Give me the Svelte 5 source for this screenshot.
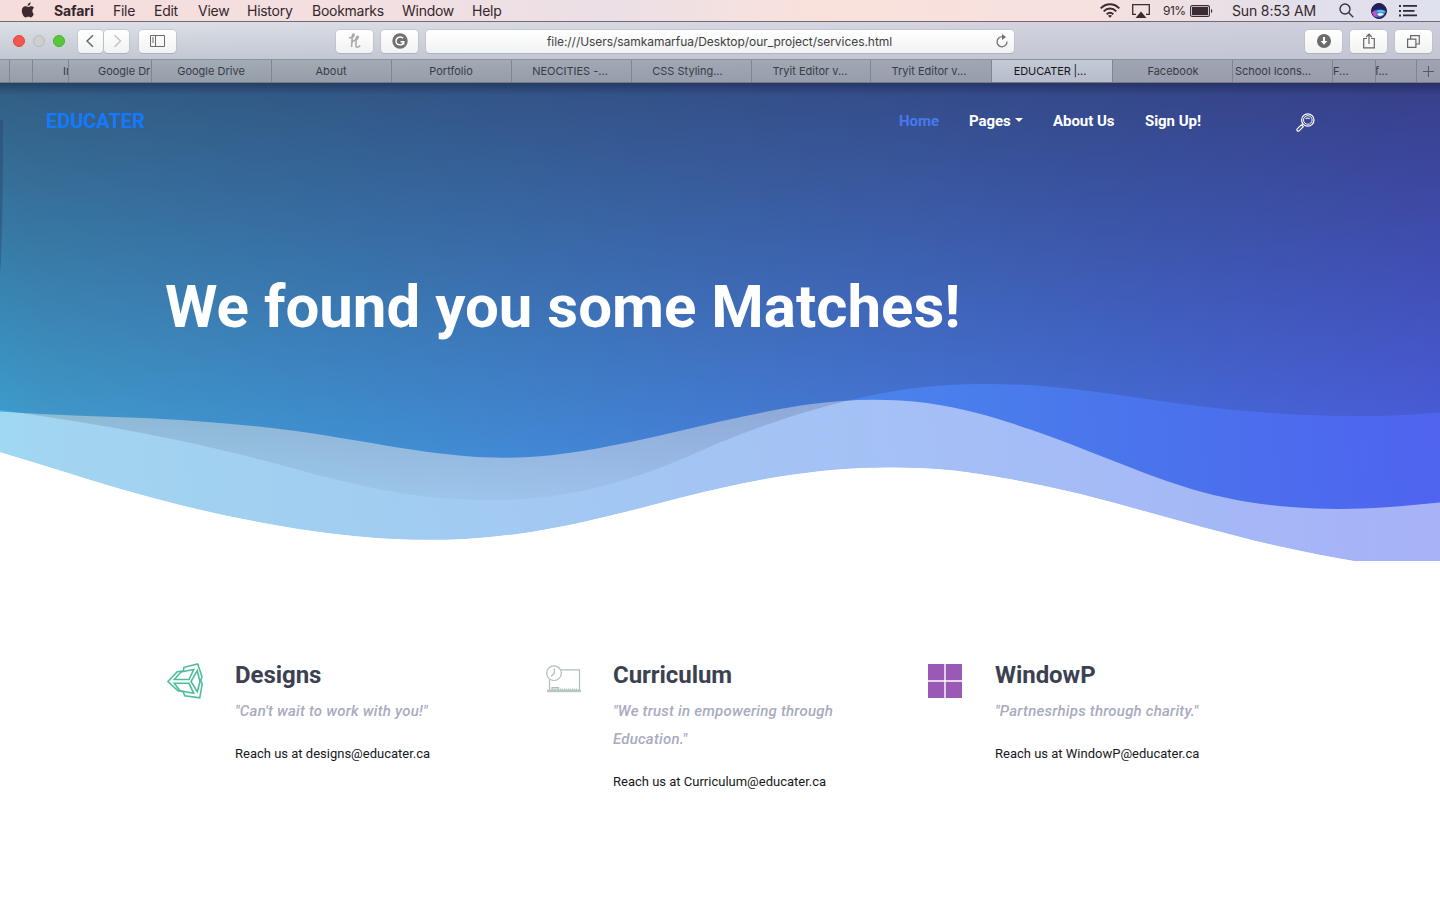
<script>
  const menus = [
    { label: 'File', width: 22 },
    { label: 'Edit', width: 25 },
    { label: 'View', width: 30 },
    { label: 'History', width: 46 },
    { label: 'Bookmarks', width: 71 },
    { label: 'Window', width: 51 },
    { label: 'Help', width: 30 },
  ];

  const tabs = [
    { label: '', width: 10 },
    { label: '', width: 23 },
    { label: 'In', width: 36, pad: 30 },
    { label: 'Google Drive', width: 83, pad: 29 },
    { label: 'Google Drive', width: 120 },
    { label: 'About', width: 120 },
    { label: 'Portfolio', width: 120 },
    { label: 'NEOCITIES -...', width: 120, shift: -3 },
    { label: 'CSS Styling...', width: 120, shift: -8 },
    { label: 'Tryit Editor v...', width: 119, shift: -2 },
    { label: 'Tryit Editor v...', width: 121, shift: -4 },
    { label: 'EDUCATER |...', width: 121, shift: -4, active: true },
    { label: 'Facebook', width: 120, shift: 1 },
    { label: 'School Icons...', width: 100, pad: 2 },
    { label: 'F...', width: 43, pad: 0 },
    { label: 'f...', width: 41, pad: -1 },
  ];

  const services = [
    { icon: 'unity', title: 'Designs', quote: '"Can\'t wait to work with you!"', mail: 'designs@educater.ca' },
    { icon: 'board', title: 'Curriculum', quote: '"We trust in empowering through Education."', mail: 'Curriculum@educater.ca' },
    { icon: 'windows', title: 'WindowP', quote: '"Partnesrhips through charity."', mail: 'WindowP@educater.ca' },
  ];

  // wave edges, left to right
  const upper = [
    [0, 411.5], [46, 414.3], [184, 420.3], [294, 430.7], [358, 440.7], [413, 449.8], [459, 455.5], [505, 457.8],
    [551, 455.2], [597, 448.5], [643, 439.3], [720, 421.5], [766, 411.8], [812, 404], [873, 399.8], [927, 403],
    [977, 413], [1032, 430], [1110, 459.5], [1156, 477.3], [1202, 492], [1248, 502], [1294, 507.3], [1337, 509],
    [1386, 507.3], [1440, 502.5],
  ];
  const middle = [
    [0, 410], [41, 416], [115, 428], [184, 441.5], [262, 460], [331, 478.3], [390, 491.3], [436, 497.5], [491, 500],
    [551, 496.3], [597, 487.5], [643, 474], [689, 456], [720, 442.5], [789, 417.3], [849, 400.3], [904, 389.5],
    [950, 384.9], [986, 384], [1041, 386], [1097, 391.9], [1179, 403.5], [1248, 411.3], [1308, 415], [1354, 416],
    [1400, 415.2], [1440, 412.5],
  ];
  const lower = [
    [0, 452.3], [60, 470.5], [124, 490], [184, 506], [262, 522.7], [331, 533.5], [376, 537.9], [424, 539.8],
    [465, 538.9], [519, 533.7], [574, 524], [643, 507.5], [720, 488.3], [780, 476.6], [835, 469.7], [892, 467.4],
    [940, 469.3], [995, 476.5], [1064, 490.3], [1133, 508], [1202, 527], [1271, 544.5], [1317, 554.3], [1354, 561],
    [1440, 574],
  ];

  // slope at point i of the parabola through it and its neighbours
  function slope(points, i) {
    const [x, y] = points[i];
    const a = points[i - 1];
    const c = points[i + 1];
    const before = a && (y - a[1]) / (x - a[0]);
    const after = c && (c[1] - y) / (c[0] - x);
    if (!a) return after;
    if (!c) return before;
    return (before * (c[0] - x) + after * (x - a[0])) / (c[0] - a[0]);
  }

  function curve(points) {
    let d = '';
    for (let i = 0; i < points.length - 1; i++) {
      const [x1, y1] = points[i];
      const [x2, y2] = points[i + 1];
      const step = (x2 - x1) / 3;
      d += `C${x1 + step} ${y1 + slope(points, i) * step} ${x2 - step} ${y2 - slope(points, i + 1) * step} ${x2} ${y2}`;
    }
    return d;
  }

  const heroPath = `M0 83V452.3${curve(lower)}L1440 83z`;
  const lightPath = `M0 411.5${curve(upper)}V600H0z`;
  const shadePath = `M0 83V410${curve(middle)}L1440 83z`;
</script>

<div class="screen">
  <div class="menubar">
    <svg class="apple" width="14" height="17" viewBox="0 0 14 17">
      <path d="M9.600.3c.1 1.100-.3 2-.9 2.700-.6.700-1.300 1.100-2.100 1.100-.1-1 .3-1.900.9-2.600.6-.7 1.400-1.100 2.100-1.200zM12.800 12c-.6 1.500-1.700 3.400-2.900 3.400-.9 0-1.400-.6-2.600-.6s-1.700.6-2.600.6C3 15.400.8 11.900.8 8.700c0-2.800 1.700-4.400 3.500-4.400 1.200 0 2 .7 2.900.7.8 0 1.700-.8 3.200-.8 1.100 0 2.100.6 2.700 1.500-2.300 1.400-2 4.900-.3 6.300z" />
    </svg>
    <b>Safari</b>
    {#each menus as menu}
      <span style="width: {menu.width}px">{menu.label}</span>
    {/each}

    <div class="status">
      <svg width="20" height="15" viewBox="0 0 20 15" fill="none" stroke="#3a2b30" stroke-width="1.900">
        <path d="M.7 5.300C6-.2 14-.2 19.300 5.300M3.700 8.300c3.700-3.700 8.900-3.700 12.600 0M6.700 11.200c2-1.900 4.600-1.900 6.600 0" />
        <path d="M10 14.800l-2-2.100c1.200-1 2.800-1 4 0z" fill="#3a2b30" stroke="none" />
      </svg>
      <svg class="airplay" width="18" height="15" viewBox="0 0 18 15">
        <path d="M4 10.300H.7V.7h16.600v9.600H14" fill="none" stroke="#3a2b30" stroke-width="1.300" />
        <path d="M9 7.500l5.500 6.500h-11z" fill="#3a2b30" />
      </svg>
      <span class="percent">91%</span>
      <svg width="23" height="12" viewBox="0 0 23 12">
        <rect x=".6" y=".6" width="18.800" height="10.800" rx="1.500" fill="none" stroke="#3a2b30" stroke-width="1.100" />
        <rect x="2" y="2" width="16" height="8" fill="#3a2b30" />
        <path d="M21 4c1.800.6 1.800 3.400 0 4z" fill="#3a2b30" />
      </svg>
      <span class="clock">Sun 8:53 AM</span>
      <svg class="lens" width="15" height="15" viewBox="0 0 15 15" fill="none" stroke="#3a303a" stroke-width="1.400">
        <circle cx="6" cy="6" r="5" />
        <path d="M9.600 9.600l4.600 4.600" />
      </svg>
      <svg class="siri" width="16" height="16" viewBox="0 0 16 16">
        <circle cx="8" cy="8" r="7.500" fill="#261d5e" stroke="#242033" />
        <path d="M1 9c4-3 8-3 14-1-1 4-4 6.500-7 6.500S2 13 1 9z" fill="#3d68c9" />
        <path d="M1.300 9.500C4 7.500 5 8 6 9.500 5 11 5 12 6 14.300c-2.700-.5-4.200-2.300-4.700-4.800z" fill="#c850d0" />
        <path d="M5 8.500c3-2 7-2 9.700.5-3 1-6 1-9.700-.5z" fill="#50c5e0" />
        <path d="M6 11c2-1.500 5-1 7 0-1 2-6 3-7 0z" fill="#dff3ff" />
      </svg>
      <svg width="18" height="12" viewBox="0 0 18 12" fill="#2c2a33">
        <path d="M0 0h2v2H0zM0 5h2v2H0zM0 9.500h2v2H0zM4 0h14v1.700H4zM4 5h11.500v1.700H4zM4 9.500h14v1.700H4z" />
      </svg>
    </div>
  </div>

  <div class="toolbar">
    <div class="lights"><i class="red"></i><i class="gray"></i><i class="green"></i></div>
    <div class="arrows">
      <div class="btn"><svg width="10" height="14" viewBox="0 0 10 14"><path d="M7 1.200L1 7l6 5.800" stroke="#666" /></svg></div>
      <div class="btn"><svg width="10" height="14" viewBox="0 0 10 14"><path d="M2.500 1.200L8.500 7l-6 5.800" stroke="#c4c4c4" /></svg></div>
    </div>
    <div class="btn wide sidebar">
      <svg width="15" height="12" viewBox="0 0 15 12">
        <path d="M.5.5h14v11H.5zM5.500.5v11M2 3h2M2 5h2M2 7h2" stroke="#6b6b6b" stroke-width="1" />
      </svg>
    </div>
    <div class="btn wide honey">
      <svg width="14" height="16" viewBox="0 0 14 16">
        <path d="M1 4.500C3.500 5.200 6.200 4 6 2 5.800.2 4.300 1.300 4.200 3.500L3.600 14M3.800 10C5 7 8 6 8.200 8c.1 2-1.300 6.300.9 6.300 1.200 0 2-.8 3.200-1.600M7.500 7C10 6 11 3.500 9.800 3.200 8.500 3 8.200 5 7.500 7z" stroke="#a9a9a9" stroke-width="1.600" />
      </svg>
    </div>
    <div class="btn wide">
      <svg width="16" height="16" viewBox="0 0 16 16">
        <circle cx="8" cy="8" r="7.700" fill="#707070" />
        <path d="M11.200 5.200C8.800 2.700 4 4.200 4 8c0 4.600 7 5.300 7.700.8H8.500M11.700 8.500v3" stroke="#fff" stroke-width="1.400" />
      </svg>
    </div>
    <div class="address">
      <span>file:///Users/samkamarfua/Desktop/our_project/services.html</span>
      <svg width="12" height="14" viewBox="0 0 12 14">
        <path d="M6.500 2.800A5 5 0 1 0 11 7.500" stroke="#6f6f6f" stroke-width="1.200" />
        <path d="M6 0l4 3-4 3z" fill="#6f6f6f" />
      </svg>
    </div>
    <div class="btn wide download">
      <svg width="14" height="14" viewBox="0 0 14 14">
        <circle cx="7" cy="7" r="7" fill="#6c6c6c" />
        <path d="M7 3v5" stroke="#fff" stroke-width="2" />
        <path d="M3.700 7h6.600L7 10.800z" fill="#fff" />
      </svg>
    </div>
    <div class="btn wide">
      <svg width="12" height="16" viewBox="0 0 12 16">
        <path d="M4 5.500H.7v9.300h10.600V5.500H8M6 11V1.500M3.200 4L6 1.200 8.800 4" stroke="#666" stroke-width="1.200" />
      </svg>
    </div>
    <div class="btn wide">
      <svg width="13" height="13" viewBox="0 0 13 13">
        <path d="M.6 4.100h8.300v8.300H.6zM3.600 4V.7h8.700V9H9" stroke="#666" stroke-width="1.200" />
      </svg>
    </div>
  </div>

  <div class="tabs">
    {#each tabs as tab}
      <div
        class="tab"
        class:active={tab.active}
        class:left={tab.pad !== undefined}
        style="width: {tab.width}px; text-indent: {tab.pad ?? tab.shift ?? -1}px"
      >{tab.label}</div>
    {/each}
    <div class="plus">
      <svg width="11" height="11" viewBox="0 0 11 11"><path d="M5.500 0v11M0 5.500h11" stroke="#555965" /></svg>
    </div>
  </div>

  <div class="hero">
    <svg class="waves" width="1440" height="478" viewBox="0 83 1440 478">
      <defs>
        <linearGradient id="base" gradientUnits="userSpaceOnUse" x1="0" y1="500" x2="1440" y2="360">
          <stop offset="0" stop-color="#3eb2e6" />
          <stop offset=".04" stop-color="#44aae0" />
          <stop offset=".25" stop-color="#439be2" />
          <stop offset=".5" stop-color="#4889e8" />
          <stop offset=".64" stop-color="#4a80ec" />
          <stop offset=".8" stop-color="#4a73ec" />
          <stop offset="1" stop-color="#4f63ef" />
        </linearGradient>
        <linearGradient id="shade" gradientUnits="userSpaceOnUse" x1="0" y1="83" x2="0" y2="500">
          <stop offset="0" stop-color="#262945" stop-opacity=".6" />
          <stop offset="1" stop-color="#262945" stop-opacity=".04" />
        </linearGradient>
        <linearGradient id="edge" x1="0" y1="0" x2="0" y2="1">
          <stop offset="0" stop-color="#101838" stop-opacity=".4" />
          <stop offset="1" stop-color="#101838" stop-opacity="0" />
        </linearGradient>
      </defs>
      <clipPath id="hero-shape">
        <path d={heroPath} />
      </clipPath>
      <g clip-path="url(#hero-shape)">
        <path fill="url(#base)" d={heroPath} />
        <path fill="#fff" fill-opacity=".5" d={lightPath} />
        <path fill="url(#shade)" d={shadePath} />
      </g>
      <rect y="83" width="1440" height="12" fill="url(#edge)" />
      <path d="M0 120h3C3 190 2 250 0 275z" fill="#26385f" fill-opacity=".35" />
    </svg>

    <nav>
      <a class="brand" href="#top">EDUCATER</a>
      <ul>
        <li class="home">Home</li>
        <li class="pages">Pages<i class="caret"></i></li>
        <li class="about">About Us</li>
        <li class="signup">Sign Up!</li>
      </ul>
      <svg class="search" width="19" height="19" viewBox="0 0 19 19" fill="none" stroke="#fff">
        <circle cx="11.800" cy="7" r="6.200" stroke-width="1.200" />
        <circle cx="11.800" cy="7" r="4.300" stroke-width="1" />
        <path d="M9.800 6c.8-1.300 2.900-1.300 3.800 0M7.200 11.300l-1.500 1.300M5.400 11.800l1.900 1.900-4.200 4.100c-1.300 1.100-3-.6-1.900-1.900z" stroke-width="1.100" />
      </svg>
    </nav>

    <h1>We found you some Matches!</h1>
  </div>

  <section>
    {#each services as service}
      <article>
        <div class="icon">
          {#if service.icon === 'unity'}
            <svg width="36" height="36" viewBox="0 0 36 36" fill="none" stroke="#4dbd9b" stroke-width="1.600">
              <path d="M.9 18.500L10.300 8.700 16.300 8 17 4.300 30.700 1 35 13.700 33.700 17.300 35.200 21.300 32.700 34.800 17.700 32.800 16.300 28.700 11 27.800z" />
              <path d="M7.300 16.500L14 9 26.700 6.500 22 16.500zM7.300 20.300H22L26.700 30.300 13 27.800zM24 18.500L30.300 7.700 33 18.700 30.300 28.700z" />
            </svg>
          {:else if service.icon === 'board'}
            <svg width="36" height="30" viewBox="0 0 36 30" fill="none" stroke="#aebebb" stroke-width="1.200">
              <path d="M15 4.800h18.500v20.500H3.500V14.500" />
              <path d="M1.600 25.200h33v1.500h-33z" fill="#d8e1df" stroke-width="1" />
              <path d="M14 24.200h18" stroke-dasharray="1 1" />
              <path d="M6 24v-1.500h6.500V24z" />
              <circle cx="8" cy="8.200" r="7.300" fill="#fff" />
              <path d="M8.300 3.500v5l-3.300 3" />
            </svg>
          {:else}
            <svg width="34" height="34" viewBox="0 0 34 34" fill="#9b59b6">
              <path d="M0 0h16.300v16.300H0zM17.700 0H34v16.300H17.700zM0 17.700h16.300V34H0zM17.700 17.700H34V34H17.700z" />
            </svg>
          {/if}
        </div>
        <div class="body">
          <h2>{service.title}</h2>
          <p class="quote">{service.quote}</p>
          <p class="reach">Reach us at {service.mail}</p>
        </div>
      </article>
    {/each}
  </section>
</div>

<style>
  :global(body) {
    background: #fff;
    overflow: hidden;
  }

  .screen {
    width: 1440px;
    height: 900px;
    overflow: hidden;
    font-family: Roboto, sans-serif;
  }

  .menubar {
    box-sizing: border-box;
    height: 22px;
    padding-left: 21px;
    display: flex;
    align-items: center;
    gap: 19px;
    color: #35272c;
    font: 14px/20px Inter, sans-serif;
    letter-spacing: -0.27px;
    white-space: nowrap;
    background: linear-gradient(90deg, #f6dddb, #f3dfe1 25%, #ebe0e6 42%, #fae1dc 57%, #f6e1df 76%, #e2dfea 90%, #dfe1ee);
    border-bottom: 1px solid #77676f;
  }
  .menubar b {
    width: 40px;
    letter-spacing: -0.1px;
  }
  .apple {
    fill: #40292e;
    margin-top: -1px;
  }
  .status {
    margin-left: auto;
    padding-right: 23px;
    display: flex;
    align-items: center;
  }
  .airplay {
    margin: 1px 13px 0 12px;
  }
  .percent {
    font-size: 12px;
    width: 27px;
    letter-spacing: -0.5px;
  }
  .clock {
    width: 84px;
    margin: 0 23px 0 19px;
    letter-spacing: -0.15px;
  }
  .siri {
    margin: 0 12px 0 17px;
  }

  .toolbar {
    box-sizing: border-box;
    height: 37px;
    padding: 1px 8px 0 13px;
    display: flex;
    align-items: center;
    background: linear-gradient(90deg, #c1cad200, #c5c3d5a0), linear-gradient(#dde1e7, #c2c8d1);
  }
  .toolbar svg {
    fill: none;
    stroke-width: 1.5;
  }
  .lights {
    display: flex;
    gap: 8px;
  }
  .lights i {
    box-sizing: border-box;
    width: 12px;
    height: 12px;
    border-radius: 50%;
  }
  .red {
    background: #f2574f;
    border: 1px solid #df4640;
  }
  .gray {
    background: #cfcfcf;
    border: 1px solid #b8bbc0;
  }
  .green {
    background: #58c73c;
    border: 1px solid #45b32d;
  }
  .btn,
  .address {
    box-sizing: border-box;
    height: 23px;
    border-radius: 4px;
    background: linear-gradient(#fff, #f1f2f2);
    box-shadow: 0 0 0 0.5px #b3b7bf, 0 1px 0 #a9adb6;
    display: flex;
    align-items: center;
    justify-content: center;
  }
  .btn {
    width: 25px;
  }
  .wide {
    width: 37px;
    margin-right: 8px;
  }
  .wide:last-child {
    margin-right: 0;
  }
  .arrows {
    display: flex;
    gap: 1px;
    margin-left: 13px;
  }
  .sidebar {
    margin-left: 10px;
  }
  .honey {
    margin-left: 152px;
  }
  .address {
    width: 588px;
    padding-right: 6px;
    font: 12px Inter, sans-serif;
    letter-spacing: -0.05px;
    color: #414141;
  }
  .address span {
    flex: 1;
    text-align: center;
    padding-left: 17px;
  }
  .download {
    margin-left: auto;
  }

  .tabs {
    box-sizing: border-box;
    height: 24px;
    display: flex;
    background: linear-gradient(90deg, #9b9bae00, #9b9bae90), linear-gradient(#a4adb6, #959ea9);
    border-top: 1px solid #8b929d;
    border-bottom: 1px solid #747b87;
  }
  .tab {
    box-sizing: border-box;
    flex: none;
    overflow: hidden;
    white-space: nowrap;
    text-align: center;
    font: 11px/22px Inter, sans-serif;
    color: #373c47;
    border-right: 1px solid #7f8592;
  }
  .tab.left {
    text-align: left;
    letter-spacing: -0.02px;
  }
  .tab.active {
    color: #15151a;
    letter-spacing: -0.15px;
    background: linear-gradient(#c4c9d6, #b8bdcd);
  }
  .plus {
    flex: 1;
    display: flex;
    align-items: center;
    justify-content: center;
  }

  .hero {
    position: relative;
    height: 478px;
    color: #fff;
  }
  .waves {
    position: absolute;
    top: 0;
    left: 0;
  }
  nav {
    position: relative;
    height: 76px;
    padding: 0 125px 0 46px;
    display: flex;
    align-items: center;
  }
  .brand {
    color: #1479fb;
    font-size: 20px;
    font-weight: 700;
    letter-spacing: -0.05px;
    text-decoration: none;
  }
  ul {
    margin: 0 0 0 auto;
    padding: 0;
    display: flex;
    list-style: none;
    font-size: 15px;
    font-weight: 700;
    letter-spacing: -0.05px;
    white-space: nowrap;
  }
  .home {
    width: 70px;
    color: #4879ee;
  }
  .pages {
    width: 84px;
  }
  .about {
    width: 92px;
  }
  .signup {
    width: 151px;
  }
  .caret {
    display: inline-block;
    margin-left: 4px;
    vertical-align: 4px;
    border: 4px solid transparent;
    border-top-color: #fff;
    border-bottom: 0;
  }
  .search {
    margin-top: 2px;
  }
  h1 {
    position: relative;
    margin: 108px 0 0 165px;
    font-size: 60px;
    line-height: 80px;
    font-weight: 700;
    white-space: nowrap;
  }

  section {
    display: grid;
    grid-template-columns: 378px 382px 380px;
    padding: 99px 0 0 167px;
  }
  article {
    display: flex;
  }
  .icon {
    width: 68px;
    padding-top: 3px;
    flex: none;
  }
  article:nth-child(2) .icon {
    padding: 5px 0 0 1px;
    width: 67px;
  }
  article:nth-child(3) .icon {
    padding: 4px 0 0 1px;
    width: 67px;
  }
  .body {
    width: 245px;
  }
  h2 {
    margin: 0;
    padding-top: 1px;
    color: #3c4152;
    font-size: 24px;
    line-height: 29px;
    font-weight: 700;
    letter-spacing: -0.05px;
  }
  .quote {
    margin: 7px 0 0;
    color: #a9abbf;
    font-size: 15px;
    line-height: 28px;
    font-weight: 500;
    font-style: italic;
    letter-spacing: 0.22px;
  }
  .reach {
    margin: 19px 0 0;
    color: #16181b;
    font-size: 13px;
    line-height: 20px;
  }
</style>
